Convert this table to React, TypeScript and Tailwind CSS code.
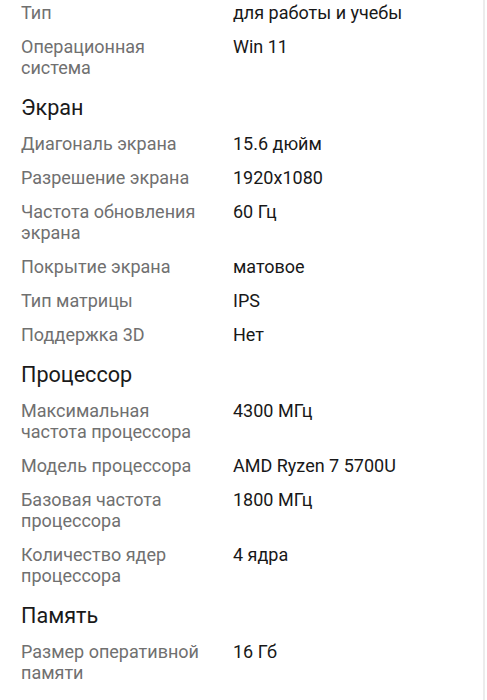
import React from "react";

type Row = { label: string; value: string };
type Block = { title?: string; rows: Row[] };

const blocks: Block[] = [
  {
    rows: [
      { label: "Тип", value: "для работы и учебы" },
      { label: "Операционная система", value: "Win 11" },
    ],
  },
  {
    title: "Экран",
    rows: [
      { label: "Диагональ экрана", value: "15.6 дюйм" },
      { label: "Разрешение экрана", value: "1920x1080" },
      { label: "Частота обновления экрана", value: "60 Гц" },
      { label: "Покрытие экрана", value: "матовое" },
      { label: "Тип матрицы", value: "IPS" },
      { label: "Поддержка 3D", value: "Нет" },
    ],
  },
  {
    title: "Процессор",
    rows: [
      { label: "Максимальная частота процессора", value: "4300 МГц" },
      { label: "Модель процессора", value: "AMD Ryzen 7 5700U" },
      { label: "Базовая частота процессора", value: "1800 МГц" },
      { label: "Количество ядер процессора", value: "4 ядра" },
    ],
  },
  {
    title: "Память",
    rows: [{ label: "Размер оперативной памяти", value: "16 Гб" }],
  },
];

export default function App() {
  return (
    <div className="h-[700px] overflow-hidden bg-white font-['Roboto','Noto_Sans',sans-serif]">
      <div className="w-[485px] min-h-[720px] -mt-[5px] border-r-2 border-[#ececec] pl-[21px]">
        {blocks.map((b, i) => (
          <div key={i}>
            {b.title && (
              <h2 className="pt-[11px] pb-[5px] text-[21.6px] leading-[26px] text-[#1a1a1a]">
                {b.title}
              </h2>
            )}
            {b.rows.map((r) => (
              <div key={r.label} className="flex py-[6.5px] text-[18px] leading-[21px]">
                <div className="w-[212px] shrink-0 pr-[26px] text-[#707070]">{r.label}</div>
                <div className="text-[#181818]">{r.value}</div>
              </div>
            ))}
          </div>
        ))}
      </div>
    </div>
  );
}
